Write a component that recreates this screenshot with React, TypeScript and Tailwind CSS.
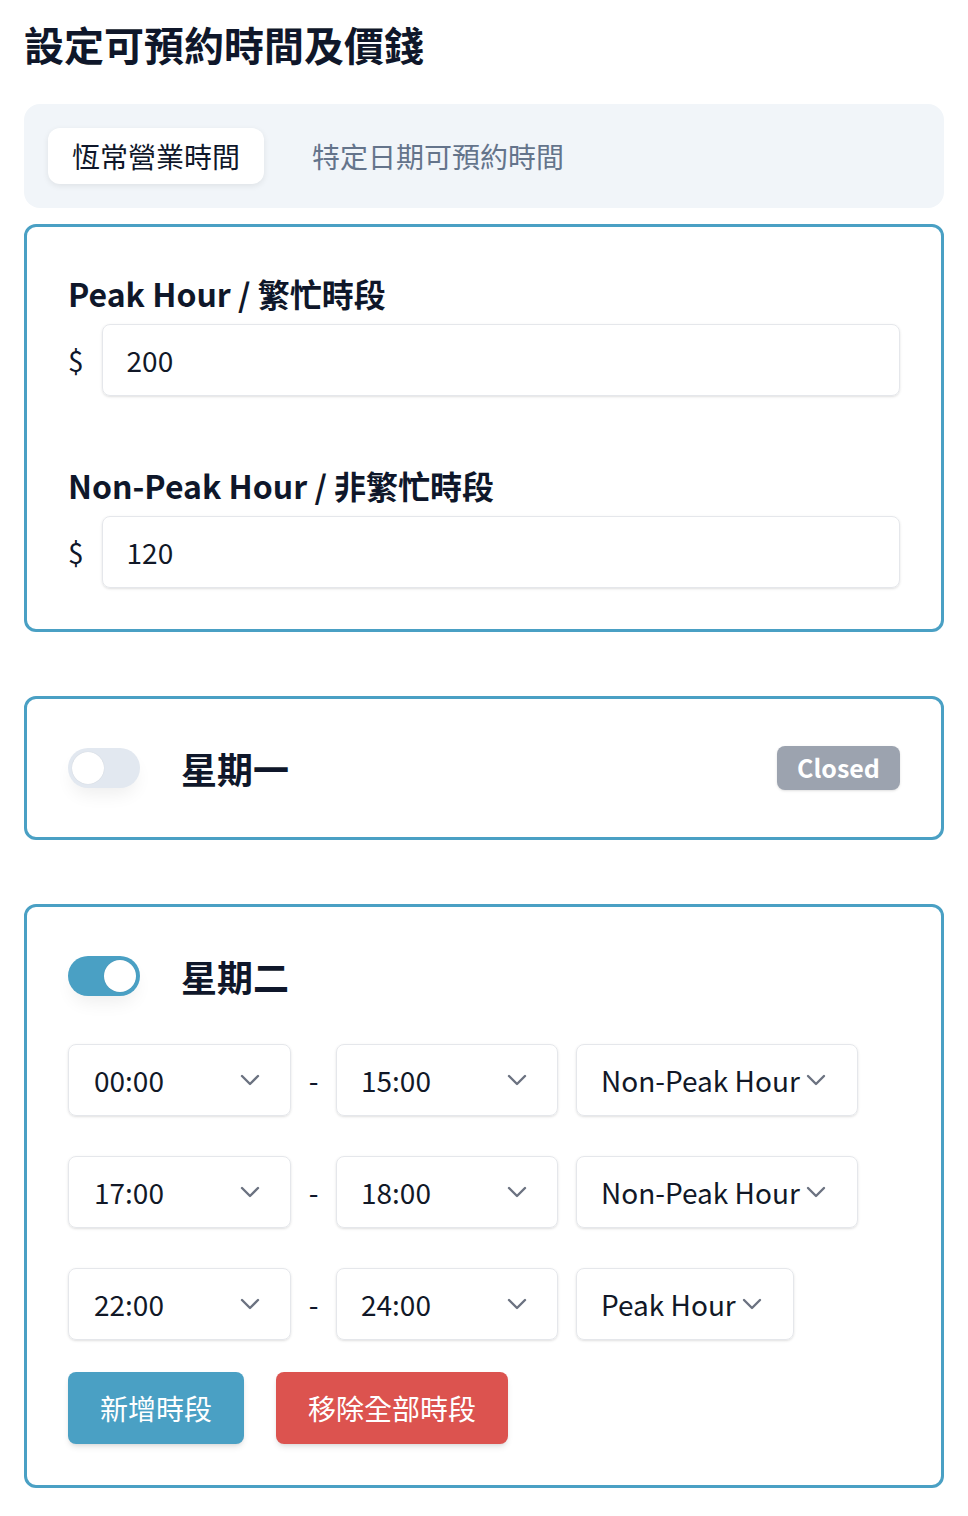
import React, { useState } from "react";

type Slot = { from: string; to: string; kind: string };

const Chevron: React.FC = () => (
  <svg width="20" height="12" viewBox="0 0 20 12" fill="none" className="shrink-0">
    <polyline
      points="2,2 10,10 18,2"
      stroke="#6b7280"
      strokeWidth="2.4"
      strokeLinecap="round"
      strokeLinejoin="round"
    />
  </svg>
);

const Toggle: React.FC<{ on: boolean; onClick: () => void }> = ({ on, onClick }) => (
  <button
    onClick={onClick}
    className={`relative w-[72px] h-[40px] rounded-full shrink-0 shadow-[0_10px_18px_-4px_rgba(0,0,0,0.07)] ${
      on ? "bg-[#4aa0c4]" : "bg-[#e2e8f0]"
    }`}
  >
    <span
      className={`absolute top-[4px] w-[32px] h-[32px] rounded-full bg-white shadow-[0_0_1px_rgba(0,0,0,0.15)] ${
        on ? "left-[36px]" : "left-[4px]"
      }`}
    />
  </button>
);

const App: React.FC = () => {
  const [monday, setMonday] = useState(false);
  const [tuesday, setTuesday] = useState(true);
  const [slots] = useState<Slot[]>([
    { from: "00:00", to: "15:00", kind: "Non-Peak Hour" },
    { from: "17:00", to: "18:00", kind: "Non-Peak Hour" },
    { from: "22:00", to: "24:00", kind: "Peak Hour" },
  ]);

  return (
    <div className="min-h-screen bg-white px-6 pt-[18px] pb-7 text-[#0f172a] font-['Noto_Sans_CJK_TC','Noto_Sans',sans-serif]">
      <h1 className="text-[40px] leading-[52px] font-bold mb-[34px]">設定可預約時間及價錢</h1>

      {/* tabs */}
      <div className="flex items-center gap-6 bg-[#f1f5f9] rounded-2xl p-6">
        <button className="h-[56px] px-6 rounded-xl bg-white shadow-[0_2px_6px_rgba(0,0,0,0.08)] text-[28px] text-[#0f172a]">
          恆常營業時間
        </button>
        <button className="h-[56px] px-6 text-[28px] text-[#64748b]">特定日期可預約時間</button>
      </div>

      {/* prices */}
      <div className="mt-4 border-[3px] border-[#4aa0c4] rounded-xl px-[41px] pt-[42px] pb-[41px]">
        <div className="text-[32px] leading-[48px] font-bold">Peak Hour / 繁忙時段</div>
        <div className="mt-[7px] flex items-center gap-[18px]">
          <span className="text-[28px]">$</span>
          <div className="flex-1 h-[72px] flex items-center px-6 border border-[#e5e7eb] rounded-lg shadow-sm text-[28px] text-[#111827]">
            200
          </div>
        </div>
        <div className="mt-[65px] text-[32px] leading-[48px] font-bold">Non-Peak Hour / 非繁忙時段</div>
        <div className="mt-[7px] flex items-center gap-[18px]">
          <span className="text-[28px]">$</span>
          <div className="flex-1 h-[72px] flex items-center px-6 border border-[#e5e7eb] rounded-lg shadow-sm text-[28px] text-[#111827]">
            120
          </div>
        </div>
      </div>

      {/* monday */}
      <div className="mt-16 border-[3px] border-[#4aa0c4] rounded-xl px-[41px] py-[47px]">
        <div className="h-[44px] flex items-center">
          <Toggle on={monday} onClick={() => setMonday(!monday)} />
          <span className="ml-[41px] text-[36px] leading-none font-bold">星期一</span>
          <span className="ml-auto w-[123px] h-[44px] flex items-center justify-center rounded-lg bg-[#9ca3af] shadow-sm text-white text-[25px] font-bold">
            Closed
          </span>
        </div>
      </div>

      {/* tuesday */}
      <div className="mt-16 border-[3px] border-[#4aa0c4] rounded-xl px-[41px] pt-[47px] pb-[41px]">
        <div className="h-[44px] flex items-center">
          <Toggle on={tuesday} onClick={() => setTuesday(!tuesday)} />
          <span className="ml-[41px] text-[36px] leading-none font-bold">星期二</span>
        </div>

        <div className="mt-[46px] flex flex-col gap-10">
          {slots.map((s, i) => (
            <div key={i} className="flex items-center">
              <div className="w-[223px] h-[72px] flex items-center justify-between pl-[25px] pr-[30px] border border-[#e5e7eb] rounded-lg shadow-sm text-[28px] text-[#111827]">
                {s.from}
                <Chevron />
              </div>
              <span className="w-[45px] text-center text-[28px]">-</span>
              <div className="w-[222px] h-[72px] flex items-center justify-between pl-6 pr-[30px] border border-[#e5e7eb] rounded-lg shadow-sm text-[28px] text-[#111827]">
                {s.to}
                <Chevron />
              </div>
              <div className="ml-[18px] h-[72px] flex items-center gap-[6px] pl-6 pr-[31px] border border-[#e5e7eb] rounded-lg shadow-sm text-[28px] text-[#111827]">
                {s.kind}
                <Chevron />
              </div>
            </div>
          ))}
        </div>

        <div className="mt-8 flex items-center gap-8">
          <button className="h-[72px] px-8 rounded-lg bg-[#4aa0c4] text-white text-[28px] shadow-md">
            新增時段
          </button>
          <button className="h-[72px] px-8 rounded-lg bg-[#dc534f] text-white text-[28px] shadow-md">
            移除全部時段
          </button>
        </div>
      </div>
    </div>
  );
};

export default App;
